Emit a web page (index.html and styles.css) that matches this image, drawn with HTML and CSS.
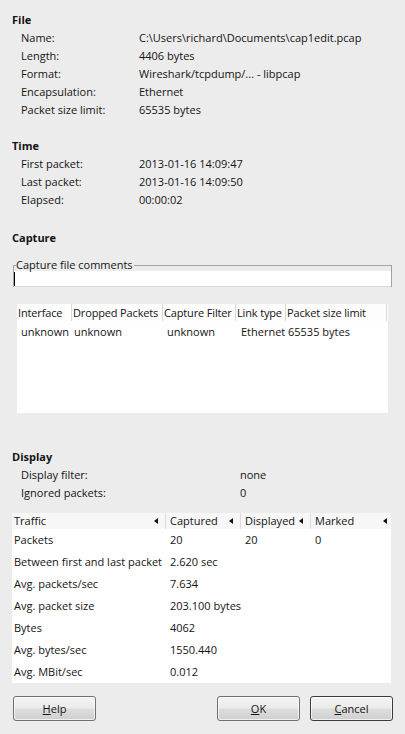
FILE: index.html
```html
<!DOCTYPE html>
<html>
<head>
<meta charset="utf-8">
<link rel="stylesheet" href="styles.css">
</head>
<body>
<div class="dlg">
  <section class="sec">
    <h2>File</h2>
    <div class="kv"><span>Name:</span><span>C:\Users\richard\Documents\cap1edit.pcap</span></div>
    <div class="kv"><span>Length:</span><span>4406 bytes</span></div>
    <div class="kv"><span>Format:</span><span>Wireshark/tcpdump/... - libpcap</span></div>
    <div class="kv"><span>Encapsulation:</span><span>Ethernet</span></div>
    <div class="kv"><span>Packet size limit:</span><span>65535 bytes</span></div>
  </section>
  <section class="sec time">
    <h2>Time</h2>
    <div class="kv"><span>First packet:</span><span>2013-01-16 14:09:47</span></div>
    <div class="kv"><span>Last packet:</span><span>2013-01-16 14:09:50</span></div>
    <div class="kv"><span>Elapsed:</span><span>00:00:02</span></div>
  </section>
  <section class="sec capture">
    <h2>Capture</h2>
    <fieldset class="group">
      <legend>Capture file comments</legend>
      <div class="input"><span class="caret"></span></div>
    </fieldset>
    <div class="iftable">
      <div class="ifhead">
        <span>Interface</span><span>Dropped Packets</span><span>Capture Filter</span><span>Link type</span><span>Packet size limit</span>
      </div>
      <div class="ifrow">
        <span class="c1">unknown</span><span class="c2">unknown</span><span class="c3">unknown</span><span class="c4">Ethernet</span><span class="c5">65535 bytes</span>
      </div>
    </div>
  </section>
  <section class="sec display">
    <h2>Display</h2>
    <div class="kv wide"><span>Display filter:</span><span>none</span></div>
    <div class="kv wide"><span>Ignored packets:</span><span>0</span></div>
  </section>
  <div class="traffic">
    <div class="thead">
      <span class="th">Traffic<i class="arr"></i></span>
      <span class="th">Captured<i class="arr"></i></span>
      <span class="th">Displayed<i class="arr"></i></span>
      <span class="th">Marked<i class="arr"></i></span>
    </div>
    <div class="tr"><span>Packets</span><span>20</span><span>20</span><span>0</span></div>
    <div class="tr"><span>Between first and last packet</span><span>2.620 sec</span><span></span><span></span></div>
    <div class="tr"><span>Avg. packets/sec</span><span>7.634</span><span></span><span></span></div>
    <div class="tr"><span>Avg. packet size</span><span>203.100 bytes</span><span></span><span></span></div>
    <div class="tr"><span>Bytes</span><span>4062</span><span></span><span></span></div>
    <div class="tr"><span>Avg. bytes/sec</span><span>1550.440</span><span></span><span></span></div>
    <div class="tr"><span>Avg. MBit/sec</span><span>0.012</span><span></span><span></span></div>
  </div>
  <div class="buttons">
    <button class="btn"><u>H</u>elp</button>
    <div class="right">
      <button class="btn"><u>O</u>K</button>
      <button class="btn default"><u>C</u>ancel</button>
    </div>
  </div>
</div>
</body>
</html>
```

FILE: styles.css
```css
html, body {
  margin: 0;
  padding: 0;
  background: #ececec;
}
body {
  font-family: "Open Sans", "Noto Sans", sans-serif;
  font-size: 11px;
  color: #141414;
  width: 405px;
  height: 734px;
  overflow: hidden;
}
.dlg {
  padding: 11px 0 0 12px;
  width: 393px;
  box-sizing: border-box;
}
.sec h2 {
  margin: 0;
  font-size: 11px;
  font-weight: 700;
  line-height: 18px;
}
.kv {
  display: grid;
  grid-template-columns: 118px 1fr;
  padding-left: 9px;
  line-height: 18px;
  height: 18px;
  white-space: nowrap;
}
.kv.wide {
  grid-template-columns: 219px 1fr;
}
.time { margin-top: 18px; }
.capture { margin-top: 20px; }
.group {
  margin: 11px 0 0 1px;
  padding: 0;
  width: 379px;
  box-sizing: border-box;
  border: 1px solid #a3a3a3;
  border-bottom: none;
  min-width: 0;
}
.group legend {
  padding: 0 1px 0 0;
  margin-left: 2px;
  line-height: 14px;
  font-size: 11px;
}
.input {
  margin-top: -1px;
  height: 15px;
  background: #fff;
  border-bottom: 1px solid #dadada;
  display: flex;
  align-items: center;
}
.caret {
  display: block;
  width: 1px;
  height: 14px;
  background: #000;
}
.iftable {
  margin: 17px 0 0 5px;
  width: 371px;
  height: 109px;
  background: #fff;
}
.ifhead, .ifrow {
  display: grid;
  grid-template-columns: 55px 91px 73px 50px 101px;
  white-space: nowrap;
}
.ifhead {
  height: 17px;
  line-height: 17px;
  background: #fdfdfd;
  letter-spacing: -0.15px;
}
.ifhead span {
  padding-left: 1px;
  border-right: 1px solid #d8d8d8;
  overflow: hidden;
}
.ifrow {
  height: 22px;
  line-height: 22px;
}
.ifrow .c1 { padding-left: 4px; }
.ifrow .c2 { padding-left: 2px; }
.ifrow .c3 { padding-left: 4px; }
.ifrow .c4 { padding-left: 5px; }
.ifrow .c5 { padding-left: 2px; }
.display { margin-top: 35px; }
.traffic {
  margin-top: 11px;
  width: 379px;
  background: #fff;
}
.thead, .tr {
  display: grid;
  grid-template-columns: 154px 75px 70px 80px;
  white-space: nowrap;
}
.thead {
  height: 16px;
  line-height: 16px;
  background: #f7f7f7;
}
.th {
  position: relative;
  padding-left: 2px;
  border-right: 1px solid #dcdcdc;
}
.th + .th { padding-left: 4px; }
.arr {
  position: absolute;
  right: 7px;
  top: 5px;
  width: 0;
  height: 0;
  border-top: 3px solid transparent;
  border-bottom: 3px solid transparent;
  border-right: 4px solid #111;
}
.th:last-child .arr { right: 4px; }
.th:last-child { border-right: none; }
.tr {
  height: 22px;
  line-height: 22px;
}
.tr span { padding-left: 4px; }
.tr span:first-child { padding-left: 2px; }
.buttons {
  margin-top: 13px;
  display: flex;
  justify-content: space-between;
  padding-left: 1px;
}
.right {
  display: flex;
  gap: 10px;
}
.btn {
  width: 83px;
  height: 25px;
  box-sizing: border-box;
  border: 1px solid #707070;
  border-radius: 3px;
  background: linear-gradient(to bottom, #f3f3f3 0%, #ebebeb 48%, #dddddd 52%, #cfcfcf 100%);
  box-shadow: inset 0 0 0 1px rgba(255,255,255,0.7);
  font-family: "Open Sans", "Noto Sans", sans-serif;
  font-size: 11px;
  color: #141414;
  padding: 0;
}
.btn u { text-decoration-thickness: 1px; text-underline-offset: 1px; }
.btn.default {
  border-color: #3c3c3c;
}
```
